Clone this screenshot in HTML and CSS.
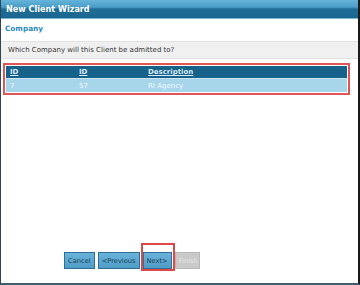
FILE: index.html
```html
<!DOCTYPE html>
<html>
<head>
<meta charset="utf-8">
<link rel="stylesheet" href="styles.css">
</head>
<body>
<div class="win">
  <div class="titlebar">New Client Wizard</div>
  <div class="section">Company</div>
  <div class="question">Which Company will this Client be admitted to?</div>
  <div class="grid-frame">
    <table class="grid">
      <thead>
        <tr><th class="c1">ID</th><th class="c2">ID</th><th>Description</th></tr>
      </thead>
      <tbody>
        <tr><td class="c1">7</td><td class="c2">57</td><td>RI Agency</td></tr>
      </tbody>
    </table>
  </div>
  <div class="spacer"></div>
  <div class="buttons">
    <button class="btn">Cancel</button>
    <button class="btn">&lt;Previous</button>
    <span class="next-wrap"><button class="btn">Next&gt;</button><span class="mark"></span></span>
    <button class="btn disabled">Finish</button>
  </div>
</div>
</body>
</html>
```
FILE: styles.css
```css
html, body { margin: 0; padding: 0; background: #fff; }
.win {
  width: 360px;
  height: 285px;
  box-sizing: border-box;
  border-left: 1px solid #2e4654;
  border-right: 2px solid #1a1a1a;
  border-bottom: 2px solid #3f5e70;
  display: flex;
  flex-direction: column;
  font-family: "DejaVu Sans", Verdana, sans-serif;
  background: #fff;
}
.titlebar {
  height: 19px;
  box-sizing: border-box;
  background: linear-gradient(to bottom, #66b4da 0%, #4a9dc8 40%, #1f6d96 50%, #1a6690 100%);
  border-bottom: 1px solid #7db6d4;
  color: #fff;
  font-weight: bold;
  font-size: 8.1px;
  line-height: 18px;
  padding-left: 5px;
}
.section {
  color: #2c8cc2;
  font-weight: bold;
  font-size: 7.3px;
  height: 22px;
  line-height: 20px;
  padding-left: 4px;
}
.question {
  background: #f0f0f0;
  border-top: 1px solid #e2e2e2;
  border-bottom: 1px solid #e2e2e2;
  height: 16px;
  line-height: 16px;
  font-size: 7px;
  color: #333;
  padding-left: 7px;
}
.grid-frame {
  margin: 4px 8px 0 2px;
  border: 2px solid #e05555;
  padding: 1px;
}
.grid {
  width: 100%;
  border-collapse: collapse;
  font-size: 7px;
}
.grid th {
  background: #17628b;
  color: #d9ebf5;
  text-align: left;
  text-decoration: underline;
  font-weight: bold;
  height: 12px;
  padding: 0 0 0 4px;
  border-bottom: 1px solid #cde6f2;
}
.grid td {
  background: #a7d5ea;
  color: #f2faff;
  height: 13px;
  padding: 0 0 0 4px;
}
.grid .c1 { width: 65px; }
.grid .c2 { width: 65px; }
.spacer { flex: 1; }
.buttons {
  display: flex;
  padding-left: 63px;
  gap: 3px;
  margin-bottom: 14px;
  align-items: flex-end;
}
.btn {
  height: 17px;
  box-sizing: border-box;
  background: linear-gradient(to bottom, #6ab3da, #4e9dc8);
  border: 1px solid #2f6f94;
  color: #1b3e55;
  font-family: "DejaVu Sans", Verdana, sans-serif;
  font-size: 6.7px;
  padding: 0 3px;
  margin: 0;
}
.btn.disabled {
  background: #c9c9c9;
  border-color: #b8b8b8;
  color: #e6e6e6;
  width: 25px;
}
.next-wrap { position: relative; display: flex; }
.mark {
  position: absolute;
  left: -2px;
  right: -3px;
  top: -9px;
  bottom: -2px;
  border: 2px solid #e04848;
}
```
